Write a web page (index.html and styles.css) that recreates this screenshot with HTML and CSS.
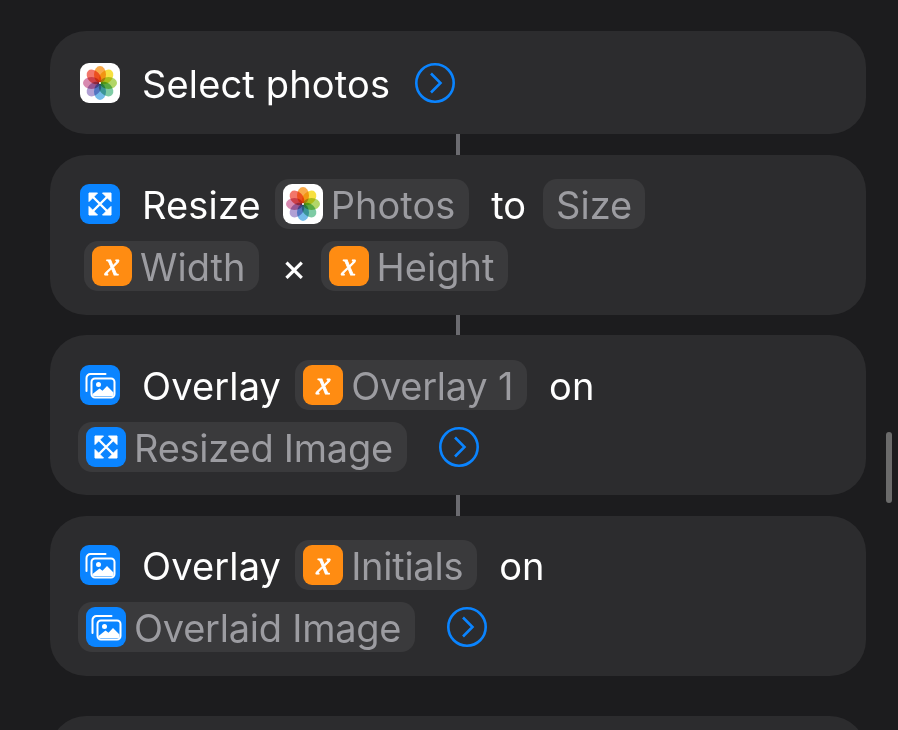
FILE: index.html
```html
<!DOCTYPE html>
<html lang="en">
<head>
  <meta charset="UTF-8" />
  <meta name="viewport" content="width=device-width, initial-scale=1.0" />
  <title>Shortcut actions</title>
  <link rel="stylesheet" href="styles.css">
</head>
<body>
  <svg class="sprite" width="0" height="0">
    <symbol id="photos" viewBox="0 0 40 40">
      <rect width="40" height="40" rx="9" fill="#fff"/>
      <g class="petals">
        <ellipse cx="20" cy="11.500" rx="6" ry="8.500" fill="#f9aa4a"/>
        <ellipse cx="20" cy="11.500" rx="6" ry="8.500" fill="#f7e040" transform="rotate(45 20 20)"/>
        <ellipse cx="20" cy="11.500" rx="6" ry="8.500" fill="#b2d668" transform="rotate(90 20 20)"/>
        <ellipse cx="20" cy="11.500" rx="6" ry="8.500" fill="#7ecba4" transform="rotate(135 20 20)"/>
        <ellipse cx="20" cy="11.500" rx="6" ry="8.500" fill="#74bbe9" transform="rotate(180 20 20)"/>
        <ellipse cx="20" cy="11.500" rx="6" ry="8.500" fill="#b1a0d4" transform="rotate(225 20 20)"/>
        <ellipse cx="20" cy="11.500" rx="6" ry="8.500" fill="#d889b0" transform="rotate(270 20 20)"/>
        <ellipse cx="20" cy="11.500" rx="6" ry="8.500" fill="#f2766a" transform="rotate(315 20 20)"/>
      </g>
      <circle cx="20" cy="20" r="1" fill="#fff"/>
    </symbol>
    <symbol id="resize" viewBox="0 0 40 40">
      <rect width="40" height="40" rx="9" fill="#0a84ff"/>
      <path d="M12 12L28 28M28 12L12 28" stroke="#fff" stroke-width="2.400" fill="none"/>
      <path d="M9 9h8.500L9 17.500zM31 9v8.500L22.500 9zM9 31v-8.500L17.500 31zM31 31h-8.500L31 22.500z" fill="#fff" stroke="#fff" stroke-width="1" stroke-linejoin="round"/>
    </symbol>
    <symbol id="overlay" viewBox="0 0 40 40">
      <rect width="40" height="40" rx="9" fill="#0a84ff"/>
      <path d="M6.500 26V13a4 4 0 0 1 4-4h15" fill="none" stroke="#fff" stroke-width="2" stroke-linecap="round"/>
      <rect x="11.500" y="13.500" width="23" height="19" rx="3.500" fill="#0a84ff" stroke="#fff" stroke-width="2"/>
      <circle cx="18.500" cy="19.500" r="2.500" fill="#fff"/>
      <path d="M12.500 29l7-5.500 3 2.200 4.500-4.700 6.500 6.500v2.500a1 1 0 0 1-1 1H14a1.500 1.500 0 0 1-1.500-1.500z" fill="#fff"/>
    </symbol>
    <symbol id="more" viewBox="0 0 40 40">
      <circle cx="20" cy="20" r="18.700" fill="none" stroke="#0a84ff" stroke-width="2.600"/>
      <path d="M16 10.500l9.500 9.500-9.500 9.500" fill="none" stroke="#0a84ff" stroke-width="2.600"/>
    </symbol>
  </svg>

  <div class="actions">
    <div class="card card-single">
      <div class="row">
        <svg class="icon"><use href="#photos"/></svg>
        <span class="title">Select photos</span>
        <svg class="more more-first"><use href="#more"/></svg>
      </div>
    </div>
    <div class="link"></div>

    <div class="card">
      <div class="row">
        <svg class="icon"><use href="#resize"/></svg>
        <span class="title">Resize</span>
        <span class="pill"><svg class="icon"><use href="#photos"/></svg><span class="label">Photos</span></span>
        <span class="word">to</span>
        <span class="pill pill-plain"><span class="label">Size</span></span>
      </div>
      <div class="row row-indent">
        <span class="pill"><span class="var">x</span><span class="label">Width</span></span>
        <span class="word word-times">×</span>
        <span class="pill"><span class="var">x</span><span class="label">Height</span></span>
      </div>
    </div>
    <div class="link"></div>

    <div class="card card-overlay">
      <div class="row">
        <svg class="icon"><use href="#overlay"/></svg>
        <span class="title">Overlay</span>
        <span class="pill pill-tight"><span class="var">x</span><span class="label">Overlay 1</span></span>
        <span class="word">on</span>
      </div>
      <div class="row row-outdent">
        <span class="pill pill-tight"><svg class="icon"><use href="#resize"/></svg><span class="label">Resized Image</span></span>
        <svg class="more"><use href="#more"/></svg>
      </div>
    </div>
    <div class="link"></div>

    <div class="card">
      <div class="row">
        <svg class="icon"><use href="#overlay"/></svg>
        <span class="title">Overlay</span>
        <span class="pill pill-tight"><span class="var">x</span><span class="label">Initials</span></span>
        <span class="word">on</span>
      </div>
      <div class="row row-outdent">
        <span class="pill pill-tight"><svg class="icon"><use href="#overlay"/></svg><span class="label">Overlaid Image</span></span>
        <svg class="more"><use href="#more"/></svg>
      </div>
    </div>

    <div class="card card-next"></div>
  </div>

  <div class="scrollbar"></div>
</body>
</html>
```

FILE: styles.css
```css
html, body {
  height: 100%;
}

body {
  margin: 0;
  background-color: #1c1c1e;
  color: #fff;
  font-family: 'Inter', 'Liberation Sans', sans-serif;
  overflow: hidden;
}

.sprite {
  position: absolute;
}

.petals {
  isolation: isolate;
}

.petals ellipse {
  mix-blend-mode: multiply;
}

.actions {
  display: flex;
  flex-direction: column;
  height: 699px;
  width: 816px;
  padding: 31px 0 0 50px;
  overflow: hidden;
}

.card {
  flex: none;
  display: flex;
  flex-direction: column;
  gap: 12px;
  padding: 24px 30px;
  background-color: #2c2c2e;
  border-radius: 36px;
}

.card-single {
  padding: 27px 30px 26px;
}

.card-overlay {
  padding: 25px 30px 23px;
}

.card-next {
  margin-top: 40px;
  height: 60px;
}

.link {
  flex: none;
  align-self: flex-start;
  width: 4px;
  height: 20.6px;
  margin-left: 406px;
  background-color: #6b6b70;
}

.row {
  display: flex;
  align-items: center;
  height: 50px;
  font-size: 38px;
}

.row-indent {
  margin-left: 4px;
}

.row-outdent {
  margin-left: -2px;
}

.icon {
  flex: none;
  width: 40px;
  height: 40px;
}

.title,
.word,
.label {
  padding-top: 2px;
}

.title {
  margin: 0 14px 0 22px;
  letter-spacing: 0.15px;
}

.word {
  margin: 0 17px 0 22px;
}

.word-times {
  margin: 0 14px 0 22px;
}

.pill {
  display: flex;
  align-items: center;
  gap: 8px;
  height: 50px;
  padding: 0 14px 0 8px;
  background-color: #3a3a3c;
  border-radius: 14px;
  color: #9c9ca1;
}

.pill-tight {
  letter-spacing: -0.25px;
}

.pill-plain {
  padding: 0 12.500px 0 13px;
}

.var {
  flex: none;
  width: 40px;
  height: 40px;
  line-height: 36px;
  text-align: center;
  background-color: #ff8c12;
  border-radius: 9px;
  color: #fff;
  font-family: 'Liberation Serif', serif;
  font-size: 32px;
  font-style: italic;
  -webkit-text-stroke: 0.8px #fff;
}

.more {
  flex: none;
  width: 40px;
  height: 40px;
  margin-left: 32px;
}

.more-first {
  margin-left: 11px;
}

.scrollbar {
  position: absolute;
  top: 432px;
  left: 886px;
  width: 6px;
  height: 71px;
  background-color: #6b6b6b;
  border-radius: 3px;
}
```
